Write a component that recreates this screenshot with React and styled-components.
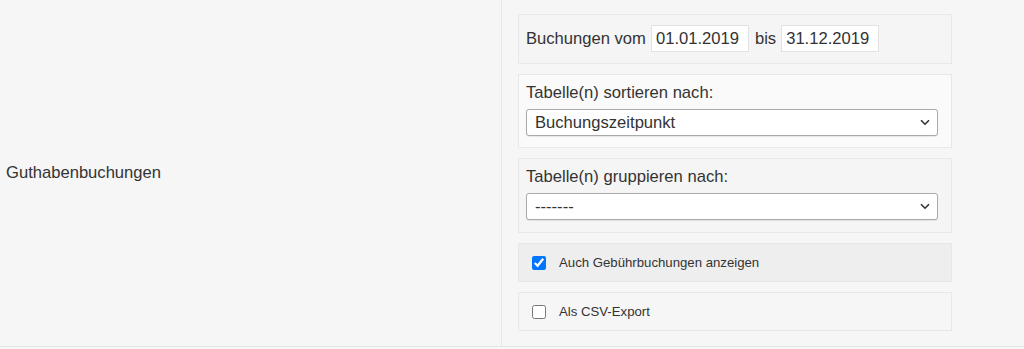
import React from 'react';
import styled, { createGlobalStyle } from 'styled-components';

const GlobalStyle = createGlobalStyle`
  html, body {
    margin: 0;
    padding: 0;
    background: #f6f6f6;
  }
  body {
    font-family: "Liberation Sans", Arial, sans-serif;
    color: #333;
  }
`;

const Row = styled.div`
  display: flex;
  width: 1024px;
  border-bottom: 1px solid #e6e6e6;
  background: #f6f6f6;
`;

const LabelCell = styled.div`
  width: 495px;
  padding-left: 6px;
  border-right: 1px solid #e8e8e8;
  display: flex;
  align-items: center;
  font-size: 16.6px;
  color: #333;
`;

const FieldCell = styled.div`
  width: 434px;
  padding: 14px 16px 15px;
  display: flex;
  flex-direction: column;
  gap: 10px;
`;

const Box = styled.div`
  border: 1px solid #e8e8e8;
  background: ${({ $tone }) => $tone || '#f5f5f5'};
  padding: ${({ $pad }) => $pad || '8px 13px 12px 7px'};
  display: flex;
  flex-direction: ${({ $row }) => ($row ? 'row' : 'column')};
  align-items: ${({ $row }) => ($row ? 'center' : 'stretch')};
  font-size: 16.6px;
`;

const FieldLabel = styled.div`
  line-height: 20px;
  margin-bottom: 6px;
`;

const Text = styled.span`
  margin-right: 5px;
  line-height: 20px;
`;

const DateInput = styled.input`
  width: 88px;
  height: 25px;
  box-sizing: content-box;
  padding: 0 4px;
  margin: 0 6px 0 0;
  border: 1px solid #e2e2e2;
  background: #fff;
  font-family: inherit;
  font-size: 16.6px;
  color: #333;
  outline: none;
`;

const SelectWrap = styled.div`
  position: relative;
  width: 412px;
`;

const Select = styled.select`
  appearance: none;
  width: 100%;
  height: 27px;
  padding: 0 30px 0 8px;
  border: 1px solid #a9a9a9;
  border-radius: 3px;
  background: #fff;
  box-shadow: 0 1px 1px rgba(0, 0, 0, 0.08);
  font-family: inherit;
  font-size: 16.6px;
  color: #333;
  outline: none;
`;

const Chevron = styled.svg`
  position: absolute;
  right: 8px;
  top: 10px;
  pointer-events: none;
`;

const Check = styled.input`
  width: 14px;
  height: 14px;
  margin: 0 13px 0 0;
  accent-color: #0075ff;
`;

const CheckLabel = styled.label`
  font-size: 13.2px;
  color: #333;
  line-height: 16px;
`;

const Dropdown = ({ value, options }) => (
  <SelectWrap>
    <Select defaultValue={value}>
      {options.map((o) => (
        <option key={o}>{o}</option>
      ))}
    </Select>
    <Chevron width="10" height="7" viewBox="0 0 10 7">
      <path d="M1 1.2 L5 5.2 L9 1.2" fill="none" stroke="#333" strokeWidth="1.6" />
    </Chevron>
  </SelectWrap>
);

const App = () => (
  <>
    <GlobalStyle />
    <Row>
      <LabelCell>Guthabenbuchungen</LabelCell>
      <FieldCell>
        <Box $row $pad="10px 8px 11px 7px">
          <Text>Buchungen vom</Text>
          <DateInput defaultValue="01.01.2019" />
          <Text>bis</Text>
          <DateInput defaultValue="31.12.2019" />
        </Box>
        <Box $tone="#fafafa" $pad="8px 13px 11px 7px">
          <FieldLabel>Tabelle(n) sortieren nach:</FieldLabel>
          <Dropdown value="Buchungszeitpunkt" options={['Buchungszeitpunkt', 'Betrag', 'Konto']} />
        </Box>
        <Box>
          <FieldLabel>Tabelle(n) gruppieren nach:</FieldLabel>
          <Dropdown value="-------" options={['-------', 'Konto', 'Monat']} />
        </Box>
        <Box $row $tone="#eeeeee" $pad="11px 13px 10px 13px">
          <Check type="checkbox" id="fee" defaultChecked />
          <CheckLabel htmlFor="fee">Auch Gebührbuchungen anzeigen</CheckLabel>
        </Box>
        <Box $row $tone="#f6f6f6" $pad="11px 13px 10px 13px">
          <Check type="checkbox" id="csv" />
          <CheckLabel htmlFor="csv">Als CSV-Export</CheckLabel>
        </Box>
      </FieldCell>
    </Row>
  </>
);

export default App;
